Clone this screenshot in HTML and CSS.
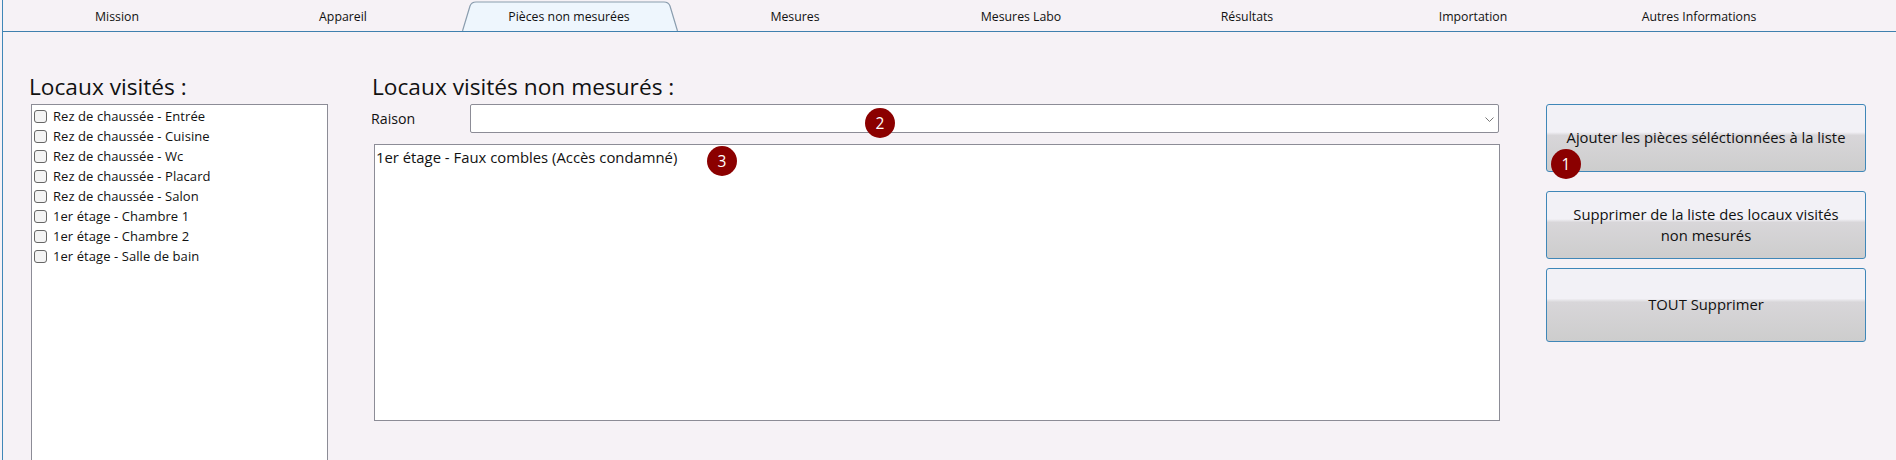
FILE: index.html
```html
<!DOCTYPE html>
<html lang="fr">
<head>
<meta charset="utf-8">
<title>Pièces non mesurées</title>
<link rel="stylesheet" href="styles.css">
</head>
<body>
<div class="app">
  <nav class="tabs">
    <a class="tab">Mission</a>
    <a class="tab">Appareil</a>
    <a class="tab active">
      <svg class="tab-shape" viewBox="0 0 216 31"><path d="M0.5 31 L8 6 Q9.5 2 14 2 L202 2 Q206.5 2 208 6 L215.5 31" fill="#eef6fd" stroke="#8a9dae" stroke-width="1.2"/></svg>
      <span class="tab-label">Pièces non mesurées</span>
    </a>
    <a class="tab">Mesures</a>
    <a class="tab">Mesures Labo</a>
    <a class="tab">Résultats</a>
    <a class="tab">Importation</a>
    <a class="tab">Autres Informations</a>
  </nav>
  <main class="content">
    <section class="col-left">
      <h2 class="title">Locaux visités :</h2>
      <ul class="list">
        <li><input type="checkbox"><span>Rez de chaussée - Entrée</span></li>
        <li><input type="checkbox"><span>Rez de chaussée - Cuisine</span></li>
        <li><input type="checkbox"><span>Rez de chaussée - Wc</span></li>
        <li><input type="checkbox"><span>Rez de chaussée - Placard</span></li>
        <li><input type="checkbox"><span>Rez de chaussée - Salon</span></li>
        <li><input type="checkbox"><span>1er étage - Chambre 1</span></li>
        <li><input type="checkbox"><span>1er étage - Chambre 2</span></li>
        <li><input type="checkbox"><span>1er étage - Salle de bain</span></li>
      </ul>
    </section>
    <section class="col-mid">
      <h2 class="title title-mid">Locaux visités non mesurés :</h2>
      <div class="reason">
        <label>Raison</label>
        <div class="combo">
          <svg class="chev" viewBox="0 0 9 5"><path d="M0.5 0.5 L4.5 4.5 L8.5 0.5" fill="none" stroke="#777"/></svg>
          <span class="badge b2">2</span>
        </div>
      </div>
      <div class="box">1er étage - Faux combles (Accès condamné)<span class="badge b3">3</span></div>
    </section>
    <section class="col-right">
      <button class="btn b-add">Ajouter les pièces séléctionnées à la liste<span class="badge b1">1</span></button>
      <button class="btn b-del">Supprimer de la liste des locaux visités non mesurés</button>
      <button class="btn b-all">TOUT Supprimer</button>
    </section>
  </main>
</div>
</body>
</html>
```
FILE: styles.css
```css
* { box-sizing: border-box; }
html, body { margin: 0; height: 100%; overflow: hidden; }
body { font-family: "Open Sans", "Noto Sans", sans-serif; font-size: 13px; color: #111; background: #f6f2f6; }
.app { width: 1894px; height: 460px; margin-left: 2px; display: flex; flex-direction: column; border-left: 1px solid #3f87b8; }
.tabs { height: 32px; flex: none; border-bottom: 1px solid #3f80ae; display: flex; padding-left: 1px; position: relative; }
.tab { width: 226px; height: 31px; padding-top: 1px; display: flex; align-items: center; justify-content: center; position: relative; font-size: 12.3px; }
.active { isolation: isolate; }
.tab-label { position: relative; }
.tab-shape { position: absolute; left: 6px; top: 0; width: 216px; height: 31px; }
.content { flex: 1; display: flex; padding: 44px 0 0 26px; position: relative; min-height: 0; }
.col-left { width: 344px; flex: none; display: flex; flex-direction: column; }
.title { margin: 0; font-weight: 400; font-size: 22.7px; line-height: 22px; height: 28px; }
.title-mid { margin-left: -1px; }
.list { list-style: none; margin: 0 0 0 2px; padding: 1px 0 0 2px; width: 297px; height: 356px; background: #fff; border: 1px solid #8c8c96; border-bottom: 0; }
.list li { height: 20px; display: flex; align-items: center; }
.list input { appearance: none; margin: 0 6px 0 0; width: 13px; height: 13px; border: 1px solid #666; border-radius: 3px; background: #f3f3f3; flex: none; }
.list span { font-size: 13px; letter-spacing: 0.07px; }
.col-mid { width: 1127px; flex: none; }
.reason { display: flex; align-items: center; height: 29px; margin-left: -2px; }
.reason label { width: 99px; font-size: 14.2px; }
.combo { width: 1029px; height: 29px; background: #fff; border: 1px solid #8c8c96; border-radius: 2px; position: relative; }
.chev { position: absolute; right: 4px; top: 12px; width: 9px; height: 5px; }
.box { margin: 11px 0 0 1px; height: 277px; background: #fff; border: 1px solid #8c8c96; padding: 2px 1px; font-size: 14.85px; line-height: 20px; position: relative; }
.col-right { width: 320px; flex: none; margin: 28px 0 0 46px; display: flex; flex-direction: column; }
.btn { font: inherit; font-size: 14.8px; color: #111; border: 1px solid #3f87b8; border-radius: 3px; background: linear-gradient(#f2f1f6 0 41%, #d8d6d9 46%, #cdcdcd 100%); padding: 0 10px; position: relative; line-height: 21px; flex: none; }
.b-add { height: 68px; margin-bottom: 19px; padding-bottom: 2px; }
.b-del { height: 68px; margin-bottom: 9px; padding: 0 20px; }
.b-all { height: 74px; padding-bottom: 2px; }
.badge { position: absolute; width: 30px; height: 30px; border-radius: 50%; background: #8b0000; color: #fff; display: flex; align-items: center; justify-content: center; font-size: 15.5px; }
.b1 { left: 4px; top: 44px; }
.b2 { left: 394px; top: 3px; }
.b3 { left: 332px; top: 1px; }
```
